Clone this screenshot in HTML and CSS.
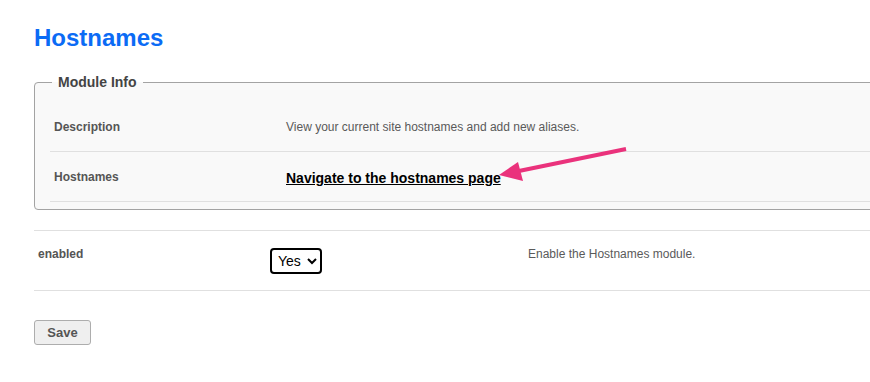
FILE: index.html
```html
<!DOCTYPE html>
<html lang="en">
<head>
    <meta charset="UTF-8">
    <meta name="viewport" content="width=device-width, initial-scale=1.0">
    <title>Hostnames</title>
    <link rel="stylesheet" href="styles.css">
</head>
<body>
    <div class="page">
        <h1 class="title">Hostnames</h1>

        <fieldset class="module-info">
            <legend>Module Info</legend>
            <div class="info-row">
                <div class="info-label">Description</div>
                <div class="info-value">View your current site hostnames and add new aliases.</div>
            </div>
            <div class="info-row">
                <div class="info-label">Hostnames</div>
                <div class="info-value"><a class="info-link" href="#">Navigate to the hostnames page</a></div>
            </div>
        </fieldset>

        <div class="setting-row">
            <div class="setting-label">enabled</div>
            <div class="setting-input">
                <select class="select">
                    <option>Yes</option>
                    <option>No</option>
                </select>
            </div>
            <div class="setting-help">Enable the Hostnames module.</div>
        </div>

        <button class="save">Save</button>

        <!-- annotation arrow -->
        <svg class="arrow" width="870" height="382" viewBox="0 0 870 382">
            <line x1="626" y1="149" x2="514" y2="172" stroke="#ea327c" stroke-width="4"/>
            <polygon points="499,175 518,162 523,181" fill="#ea327c"/>
        </svg>
    </div>
</body>
</html>
```

FILE: styles.css
```css
* {
    box-sizing: border-box;
}
html, body {
    margin: 0;
    padding: 0;
    overflow: hidden;
    background: #fff;
}
body {
    font-family: "Liberation Sans", Arial, sans-serif;
    font-size: 12px;
    color: #555;
}
.page {
    position: relative;
    width: 920px;
    padding: 24px 0 0 34px;
    min-height: 382px;
}
.title {
    margin: 0;
    font-size: 24px;
    line-height: 28px;
    font-weight: bold;
    color: #0b6bf5;
}
.module-info {
    margin: 22px 0 0;
    padding: 12px 0 7px 15px;
    border: 1px solid #a3a3a3;
    border-radius: 4px;
    background: #f9f9f9;
}
.module-info legend {
    margin-left: 2px;
    padding: 0 6px;
    font-size: 14px;
    line-height: 16px;
    font-weight: bold;
    color: #444;
}
.info-row {
    display: flex;
    align-items: center;
    height: 50px;
    padding-top: 1px;
    border-bottom: 1px solid #e0e0e0;
}
.info-label {
    width: 236px;
    padding-left: 4px;
    font-weight: bold;
    color: #555;
}
.info-value {
    color: #5a5a5a;
}
.info-link {
    position: relative;
    top: 1px;
    font-size: 14px;
    color: #000;
    font-weight: bold;
    text-decoration: underline;
}
.setting-row {
    display: flex;
    align-items: flex-start;
    margin-top: 20px;
    height: 61px;
    border-top: 1px solid #e0e0e0;
    border-bottom: 1px solid #e0e0e0;
}
.setting-label {
    width: 236px;
    padding: 16px 0 0 4px;
    font-weight: bold;
    color: #555;
}
.setting-input {
    width: 258px;
    padding-top: 17px;
}
.setting-help {
    padding-top: 16px;
    color: #5a5a5a;
}
.select {
    width: 52px;
    height: 26px;
    padding: 0 2px;
    font-family: "Liberation Sans", Arial, sans-serif;
    font-size: 14px;
    color: #000;
    background: #fff;
    border: 2px solid #000;
    border-radius: 4px;
}
.save {
    display: block;
    margin-top: 29px;
    width: 57px;
    height: 25px;
    padding: 0;
    font-family: "Liberation Sans", Arial, sans-serif;
    font-size: 13px;
    font-weight: bold;
    color: #555;
    background: #efefef;
    border: 1px solid #adadad;
    border-radius: 3px;
}
.arrow {
    position: absolute;
    left: 0;
    top: 0;
    pointer-events: none;
}
```
